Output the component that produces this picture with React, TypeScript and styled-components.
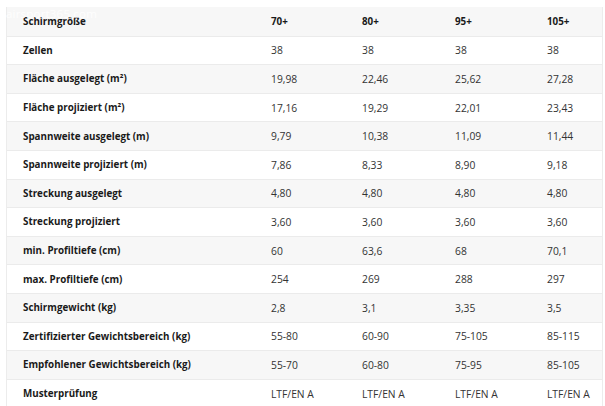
import React from "react";
import styled, { createGlobalStyle } from "styled-components";

const GlobalStyle = createGlobalStyle`
  html, body {
    margin: 0;
    padding: 0;
    background: #ffffff;
  }
  body {
    font-family: "Open Sans", "Liberation Sans", sans-serif;
  }
`;

const Page = styled.div`
  position: relative;
  width: 605px;
  height: 406px;
  overflow: hidden;
  padding: 7px 2px 0 6px;
  box-sizing: border-box;
`;

const Table = styled.div`
  display: flex;
  flex-direction: column;
  border-left: 1px solid #ececec;
  border-right: 1px solid #ececec;
`;

const Row = styled.div<{ $shaded: boolean }>`
  display: grid;
  grid-template-columns: 248px 91px 93px 92px 1fr;
  align-items: center;
  height: 28.6px;
  box-sizing: border-box;
  padding-left: 16px;
  background: ${(p) => (p.$shaded ? "#f7f7f7" : "#ffffff")};
  border-top: 1px solid #ebebeb;

  &:first-child {
    border-top: none;
  }
`;

const Label = styled.div`
  font-size: 9.8px;
  font-weight: 700;
  color: #1a1a1a;
  white-space: nowrap;
`;

const Cell = styled.div<{ $head?: boolean }>`
  font-size: ${(p) => (p.$head ? "9.8px" : "10.3px")};
  font-weight: ${(p) => (p.$head ? 700 : 400)};
  color: ${(p) => (p.$head ? "#1a1a1a" : "#333333")};
  white-space: nowrap;
`;

const Watermark = styled.div`
  position: absolute;
  top: 6px;
  left: 6px;
  font-size: 11.5px;
  color: rgba(255, 255, 255, 0.85);
  letter-spacing: 0.2px;
  pointer-events: none;
`;

const sizes = ["70+", "80+", "95+", "105+"];

const rows: [string, string[]][] = [
  ["Zellen", ["38", "38", "38", "38"]],
  ["Fläche ausgelegt (m²)", ["19,98", "22,46", "25,62", "27,28"]],
  ["Fläche projiziert (m²)", ["17,16", "19,29", "22,01", "23,43"]],
  ["Spannweite ausgelegt (m)", ["9,79", "10,38", "11,09", "11,44"]],
  ["Spannweite projiziert (m)", ["7,86", "8,33", "8,90", "9,18"]],
  ["Streckung ausgelegt", ["4,80", "4,80", "4,80", "4,80"]],
  ["Streckung projiziert", ["3,60", "3,60", "3,60", "3,60"]],
  ["min. Profiltiefe (cm)", ["60", "63,6", "68", "70,1"]],
  ["max. Profiltiefe (cm)", ["254", "269", "288", "297"]],
  ["Schirmgewicht (kg)", ["2,8", "3,1", "3,35", "3,5"]],
  ["Zertifizierter Gewichtsbereich (kg)", ["55-80", "60-90", "75-105", "85-115"]],
  ["Empfohlener Gewichtsbereich (kg)", ["55-70", "60-80", "75-95", "85-105"]],
  ["Musterprüfung", ["LTF/EN A", "LTF/EN A", "LTF/EN A", "LTF/EN A"]],
];

export default function App() {
  return (
    <>
      <GlobalStyle />
      <Page>
        <Table>
          <Row $shaded>
            <Label>Schirmgröße</Label>
            {sizes.map((s) => (
              <Cell key={s} $head>
                {s}
              </Cell>
            ))}
          </Row>
          {rows.map(([label, values], i) => (
            <Row key={label} $shaded={i % 2 === 1}>
              <Label>{label}</Label>
              {values.map((v, j) => (
                <Cell key={j}>{v}</Cell>
              ))}
            </Row>
          ))}
        </Table>
        <Watermark>airsport365.com</Watermark>
      </Page>
    </>
  );
}
